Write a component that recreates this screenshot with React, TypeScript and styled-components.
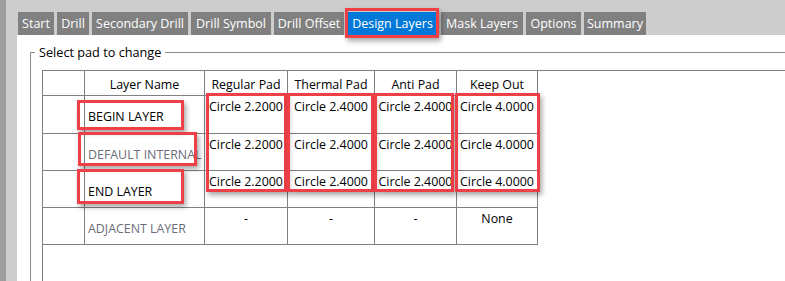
import React from "react";
import styled, { createGlobalStyle } from "styled-components";

const Global = createGlobalStyle`
  html, body { margin: 0; padding: 0; background: #fff; }
  body { font-family: "Open Sans", "Noto Sans", Arial, sans-serif; }
  * { box-sizing: border-box; }
`;

const Window = styled.div`
  position: relative;
  width: 785px;
  height: 281px;
  overflow: hidden;
  display: flex;
  background: #cdcdcd;
`;

const Rail = styled.div`
  flex: none;
  width: 6px;
  background: #9d9d9d;
`;

const Frame = styled.div`
  flex: 1;
  min-width: 0;
  display: flex;
  flex-direction: column;
  padding: 12px 0 0 11px;
`;

const TabBar = styled.div`
  flex: none;
  display: flex;
  gap: 3px;
  height: 23px;
  padding-left: 1px;
`;

const Tab = styled.div<{ $w: number; $active?: boolean }>`
  width: ${(p) => p.$w}px;
  background: ${(p) => (p.$active ? "#0078d7" : "#808080")};
  color: #fff;
  font-size: 12.5px;
  display: flex;
  align-items: center;
  justify-content: center;
  white-space: nowrap;
`;

const Page = styled.div`
  flex: 1;
  background: #fff;
  padding: 9px 0 0 13px;
`;

const GroupBox = styled.fieldset`
  margin: 0;
  padding: 10px 0 0 0;
  border: none;
  border-top: 1px solid #8a8a8a;
  border-left: 1px solid #8a8a8a;
  min-width: 0;
  height: 260px;
`;

const Legend = styled.legend`
  margin-left: 4px;
  padding: 0 4px;
  font-size: 12.7px;
  line-height: 16px;
  color: #000;
`;

const GridView = styled.div`
  height: 240px;
  margin-left: 11px;
  border-top: 1px solid #808080;
  border-left: 1px solid #808080;
  background: #fff;
`;

const Grid = styled.div`
  display: grid;
  grid-template-columns: 42px 120px 83px 87px 82px 81px;
  grid-template-rows: 25px 38px 37px 37px 37px;
  width: max-content;
`;

const Cell = styled.div`
  border-right: 1px solid #808080;
  border-bottom: 1px solid #808080;
  font-size: 12.4px;
  line-height: 16px;
  color: #000;
  white-space: nowrap;
  overflow: hidden;
`;

const HeaderCell = styled(Cell)`
  display: flex;
  align-items: center;
  justify-content: center;
  padding-top: 3px;
`;

const NameCell = styled(Cell)<{ $muted?: boolean }>`
  display: flex;
  align-items: center;
  padding: 5px 0 0 3px;
  color: ${(p) => (p.$muted ? "#6c6c7a" : "#000")};
`;

const ValueCell = styled(Cell)`
  text-align: center;
  padding-top: 3px;
`;

const Mark = styled.div<{ $x: number; $y: number; $w: number; $h: number }>`
  position: absolute;
  left: ${(p) => p.$x}px;
  top: ${(p) => p.$y}px;
  width: ${(p) => p.$w}px;
  height: ${(p) => p.$h}px;
  border: 3px solid #ef3f47;
  box-shadow: 2px 3px 5px rgba(0, 0, 0, 0.35);
  pointer-events: none;
`;

const tabs: { label: string; w: number; active?: boolean }[] = [
  { label: "Start", w: 36 },
  { label: "Drill", w: 32 },
  { label: "Secondary Drill", w: 96 },
  { label: "Drill Symbol", w: 80 },
  { label: "Drill Offset", w: 70 },
  { label: "Design Layers", w: 91, active: true },
  { label: "Mask Layers", w: 82 },
  { label: "Options", w: 55 },
  { label: "Summary", w: 62 },
];

const headers = ["", "Layer Name", "Regular Pad", "Thermal Pad", "Anti Pad", "Keep Out"];

const rows: { name: string; muted?: boolean; values: string[] }[] = [
  { name: "BEGIN LAYER", values: ["Circle 2.2000", "Circle 2.4000", "Circle 2.4000", "Circle 4.0000"] },
  { name: "DEFAULT INTERNAL", muted: true, values: ["Circle 2.2000", "Circle 2.4000", "Circle 2.4000", "Circle 4.0000"] },
  { name: "END LAYER", values: ["Circle 2.2000", "Circle 2.4000", "Circle 2.4000", "Circle 4.0000"] },
  { name: "ADJACENT LAYER", muted: true, values: ["-", "-", "-", "None"] },
];

const marks = [
  { x: 345, y: 8, w: 94, h: 30 },
  { x: 77, y: 100, w: 107, h: 30 },
  { x: 78, y: 132, w: 119, h: 34 },
  { x: 77, y: 169, w: 107, h: 35 },
  { x: 206, y: 93, w: 81, h: 99 },
  { x: 287, y: 93, w: 87, h: 99 },
  { x: 374, y: 93, w: 80, h: 99 },
  { x: 455, y: 93, w: 85, h: 99 },
];

export default function App() {
  return (
    <>
      <Global />
      <Window>
        <Rail />
        <Frame>
          <TabBar>
            {tabs.map((t) => (
              <Tab key={t.label} $w={t.w} $active={t.active}>
                {t.label}
              </Tab>
            ))}
          </TabBar>
          <Page>
            <GroupBox>
              <Legend>Select pad to change</Legend>
              <GridView>
                <Grid>
                  {headers.map((h, i) => (
                    <HeaderCell key={i}>{h}</HeaderCell>
                  ))}
                  {rows.map((r) => (
                    <React.Fragment key={r.name}>
                      <Cell />
                      <NameCell $muted={r.muted}>{r.name}</NameCell>
                      {r.values.map((v, j) => (
                        <ValueCell key={j}>{v}</ValueCell>
                      ))}
                    </React.Fragment>
                  ))}
                </Grid>
              </GridView>
            </GroupBox>
          </Page>
        </Frame>
        {marks.map((m, i) => (
          <Mark key={i} $x={m.x} $y={m.y} $w={m.w} $h={m.h} />
        ))}
      </Window>
    </>
  );
}
